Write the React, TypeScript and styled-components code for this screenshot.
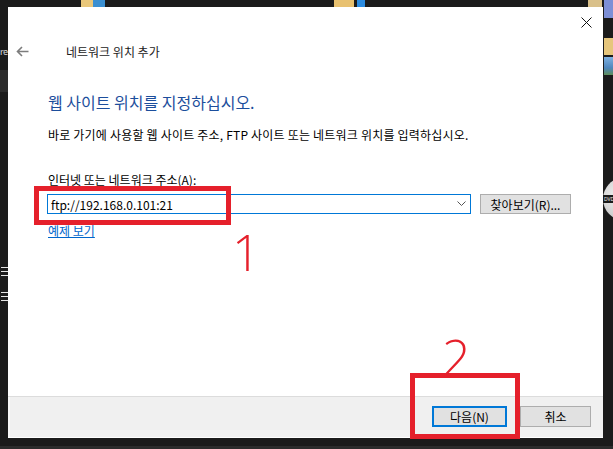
import React from "react";
import styled, { createGlobalStyle } from "styled-components";

const GlobalStyle = createGlobalStyle`
    html, body {
        margin: 0;
        padding: 0;
        background: #1b1b1b;
    }
    body {
        font-family: "Noto Sans CJK KR", "Noto Sans", sans-serif;
    }
`;

const RED = "#e5202b";
const DARK = "#1b1b1b";

const block = (color: string, x: number, y: number, w: number, h: number) =>
    `linear-gradient(${color}, ${color}) ${x}px ${y}px / ${w}px ${h}px no-repeat`;

const Desktop = styled.div`
    position: relative;
    width: 613px;
    height: 449px;
    overflow: hidden;
    background: ${DARK};
    display: grid;
    grid-template-columns: 8px 595px 10px;
    grid-template-rows: 7px 431px 8px 3px;
`;

/* desktop icons peeking out above the dialog */
const TopEdge = styled.div`
    grid-column: 1 / 3;
    grid-row: 1;
    background: ${block("#e9c77a", 81, 0, 12, 7)}, ${block("#3a8fd1", 93, 0, 12, 7)},
        ${block("#e8c170", 334, 0, 20, 7)}, ${block("#2b8be0", 357, 0, 8, 7)},
        ${block("#d9c08a", 588, 0, 14, 7)}, ${DARK};
`;

const LeftEdge = styled.div`
    grid-column: 1;
    grid-row: 2 / 4;
    display: flex;
    flex-direction: column;
    align-items: flex-start;
    padding-top: 38px;
    overflow: hidden;
`;

const SideLabel = styled.span`
    font-family: "Noto Sans", sans-serif;
    font-size: 9px;
    line-height: 14px;
    letter-spacing: -0.5px;
    color: #d8d8d8;
`;

const SideBand = styled.div`
    width: 8px;
    height: 22px;
    margin-top: 11px;
    background: #2b2b2b;
`;

const MenuLines = styled.svg`
    display: block;
    margin-top: 174px;
`;

const RightEdge = styled.div`
    grid-column: 3;
    grid-row: 1 / 4;
    display: flex;
    flex-direction: column;
    overflow: hidden;
    padding-top: 178px;
    background: ${block("#7d8fd6", 1, 0, 9, 18)}, ${block("#e6c67c", 1, 38, 9, 17)},
        linear-gradient(#7fb1e0, #4f86bd 60%, #5f8f5a) 1px 57px / 9px 18px no-repeat, ${DARK};
`;

const Disc = styled.div`
    flex: none;
    width: 40px;
    height: 42px;
    border-radius: 50%;
    background: radial-gradient(circle at 40% 40%, #f2f2f2, #b9b9b9);
    display: flex;
    align-items: center;
`;

const DiscBand = styled.div`
    width: 100%;
    height: 8px;
    background: #1a1a1a;
    color: #eee;
    font-family: "Noto Sans", sans-serif;
    font-size: 5px;
    line-height: 8px;
    padding-left: 1px;
`;

const Taskbar = styled.div`
    grid-column: 1 / 4;
    grid-row: 4;
    background: #2c2c2c;
`;

const Window = styled.div`
    grid-column: 2;
    grid-row: 2;
    display: flex;
    flex-direction: column;
    background: #ffffff;
`;

const TitleBar = styled.div`
    display: flex;
    justify-content: flex-end;
    height: 30px;
`;

const CloseButton = styled.div`
    width: 34px;
    height: 30px;
    display: flex;
    align-items: center;
    justify-content: center;
`;

const NavRow = styled.div`
    display: flex;
    align-items: center;
    height: 29px;
    padding-left: 8px;
    gap: 37px;
`;

const BackArrow = styled.svg`
    display: block;
`;

const WindowTitle = styled.div`
    font-size: 12px;
    color: #1a1a1a;
`;

const Content = styled.div`
    flex: 1;
    padding-left: 40px;
    padding-right: 24px;
`;

const MainInstruction = styled.div`
    margin-top: 25px;
    font-size: 16px;
    line-height: 22px;
    color: #1c4e9c;
`;

const BodyText = styled.div`
    margin-top: 13px;
    font-size: 12px;
    line-height: 18px;
    color: #000;
    letter-spacing: 0.2px;
`;

const FieldLabel = styled.div`
    margin-top: 27px;
    font-size: 12px;
    line-height: 18px;
    color: #000;
`;

const FieldRow = styled.div`
    display: flex;
    align-items: center;
    gap: 9px;
    margin-top: 5px;
    margin-left: -1px;
`;

const Combo = styled.div`
    box-sizing: border-box;
    width: 424px;
    height: 20px;
    border: 1px solid #0078d7;
    display: flex;
    align-items: center;
    justify-content: space-between;
    padding: 0 4px 0 3px;
`;

const ComboText = styled.span`
    font-size: 12px;
    color: #000;
`;

const Button = styled.div<{ $width: number; $default?: boolean }>`
    box-sizing: border-box;
    width: ${(p) => p.$width}px;
    height: ${(p) => (p.$default ? 21 : 20)}px;
    border: ${(p) => (p.$default ? "2px solid #0078d7" : "1px solid #adadad")};
    background: #e1e1e1;
    display: flex;
    align-items: center;
    justify-content: center;
    font-size: 12px;
    color: #000;
`;

const CancelButton = styled(Button)`
    height: 21px;
`;

const ExampleLink = styled.a`
    display: inline-block;
    margin-top: 9px;
    font-size: 12px;
    line-height: 16px;
    color: #0066cc;
    text-decoration: underline;
`;

const Footer = styled.div`
    display: flex;
    justify-content: flex-end;
    align-items: flex-start;
    gap: 13px;
    height: 41px;
    box-sizing: border-box;
    padding: 9px 12px 0 0;
    margin-bottom: 1px;
    background: #f0f0f0;
    border-top: 1px solid #dcdcdc;
    box-shadow: inset 2px 0 0 #f7f7f7;
`;

/* red annotation marks drawn over the screenshot */
const Highlight = styled.div<{ $left: number; $top: number; $w: number; $h: number }>`
    position: absolute;
    box-sizing: border-box;
    left: ${(p) => p.$left}px;
    top: ${(p) => p.$top}px;
    width: ${(p) => p.$w}px;
    height: ${(p) => p.$h}px;
    border: 5px solid ${RED};
`;

const StepNumber = styled.span<{ $left: number; $top: number }>`
    position: absolute;
    left: ${(p) => p.$left}px;
    top: ${(p) => p.$top}px;
    font-family: "Open Sans", "Noto Sans", sans-serif;
    font-weight: 300;
    font-size: 50px;
    line-height: 50px;
    color: ${RED};
`;

export default function App() {
    return (
        <>
            <GlobalStyle />
            <Desktop>
                <TopEdge />
                <LeftEdge>
                    <SideLabel>re</SideLabel>
                    <SideBand />
                    <MenuLines width="8" height="40" viewBox="0 0 8 40">
                        <path d="M1 1.5H8M1 5.5H8M1 9.5H8M1 26.5H8M1 30.5H8M1 34.5H8" stroke="#e6e6e6" strokeWidth="1" />
                    </MenuLines>
                </LeftEdge>

                <Window>
                    <TitleBar>
                        <CloseButton>
                            <svg width="11" height="11" viewBox="0 0 11 11">
                                <path d="M0.5 0.5L10.5 10.5M10.5 0.5L0.5 10.5" stroke="#111" strokeWidth="1" />
                            </svg>
                        </CloseButton>
                    </TitleBar>
                    <NavRow>
                        <BackArrow width="13" height="11" viewBox="0 0 13 11">
                            <path d="M12.5 5.5H1.5M6 1L1.5 5.5L6 10" stroke="#7c7c7c" strokeWidth="1.6" fill="none" />
                        </BackArrow>
                        <WindowTitle>네트워크 위치 추가</WindowTitle>
                    </NavRow>
                    <Content>
                        <MainInstruction>웹 사이트 위치를 지정하십시오.</MainInstruction>
                        <BodyText>
                            바로 가기에 사용할 웹 사이트 주소, FTP 사이트 또는 네트워크 위치를 입력하십시오.
                        </BodyText>
                        <FieldLabel>인터넷 또는 네트워크 주소(A):</FieldLabel>
                        <FieldRow>
                            <Combo>
                                <ComboText>ftp://192.168.0.101:21</ComboText>
                                <svg width="9" height="6" viewBox="0 0 9 6">
                                    <path d="M0.5 0.5L4.5 4.5L8.5 0.5" stroke="#555" strokeWidth="1" fill="none" />
                                </svg>
                            </Combo>
                            <Button $width={91}>찾아보기(R)...</Button>
                        </FieldRow>
                        <ExampleLink>예제 보기</ExampleLink>
                    </Content>
                    <Footer>
                        <Button $width={75} $default>
                            다음(N)
                        </Button>
                        <CancelButton $width={71}>취소</CancelButton>
                    </Footer>
                </Window>

                <RightEdge>
                    <Disc>
                        <DiscBand>DVD</DiscBand>
                    </Disc>
                </RightEdge>

                <Taskbar />

                <Highlight $left={34} $top={186} $w={197} $h={39} />
                <StepNumber $left={232} $top={227}>1</StepNumber>
                <Highlight $left={410} $top={373} $w={110} $h={66} />
                <StepNumber $left={442} $top={332}>2</StepNumber>
            </Desktop>
        </>
    );
}
